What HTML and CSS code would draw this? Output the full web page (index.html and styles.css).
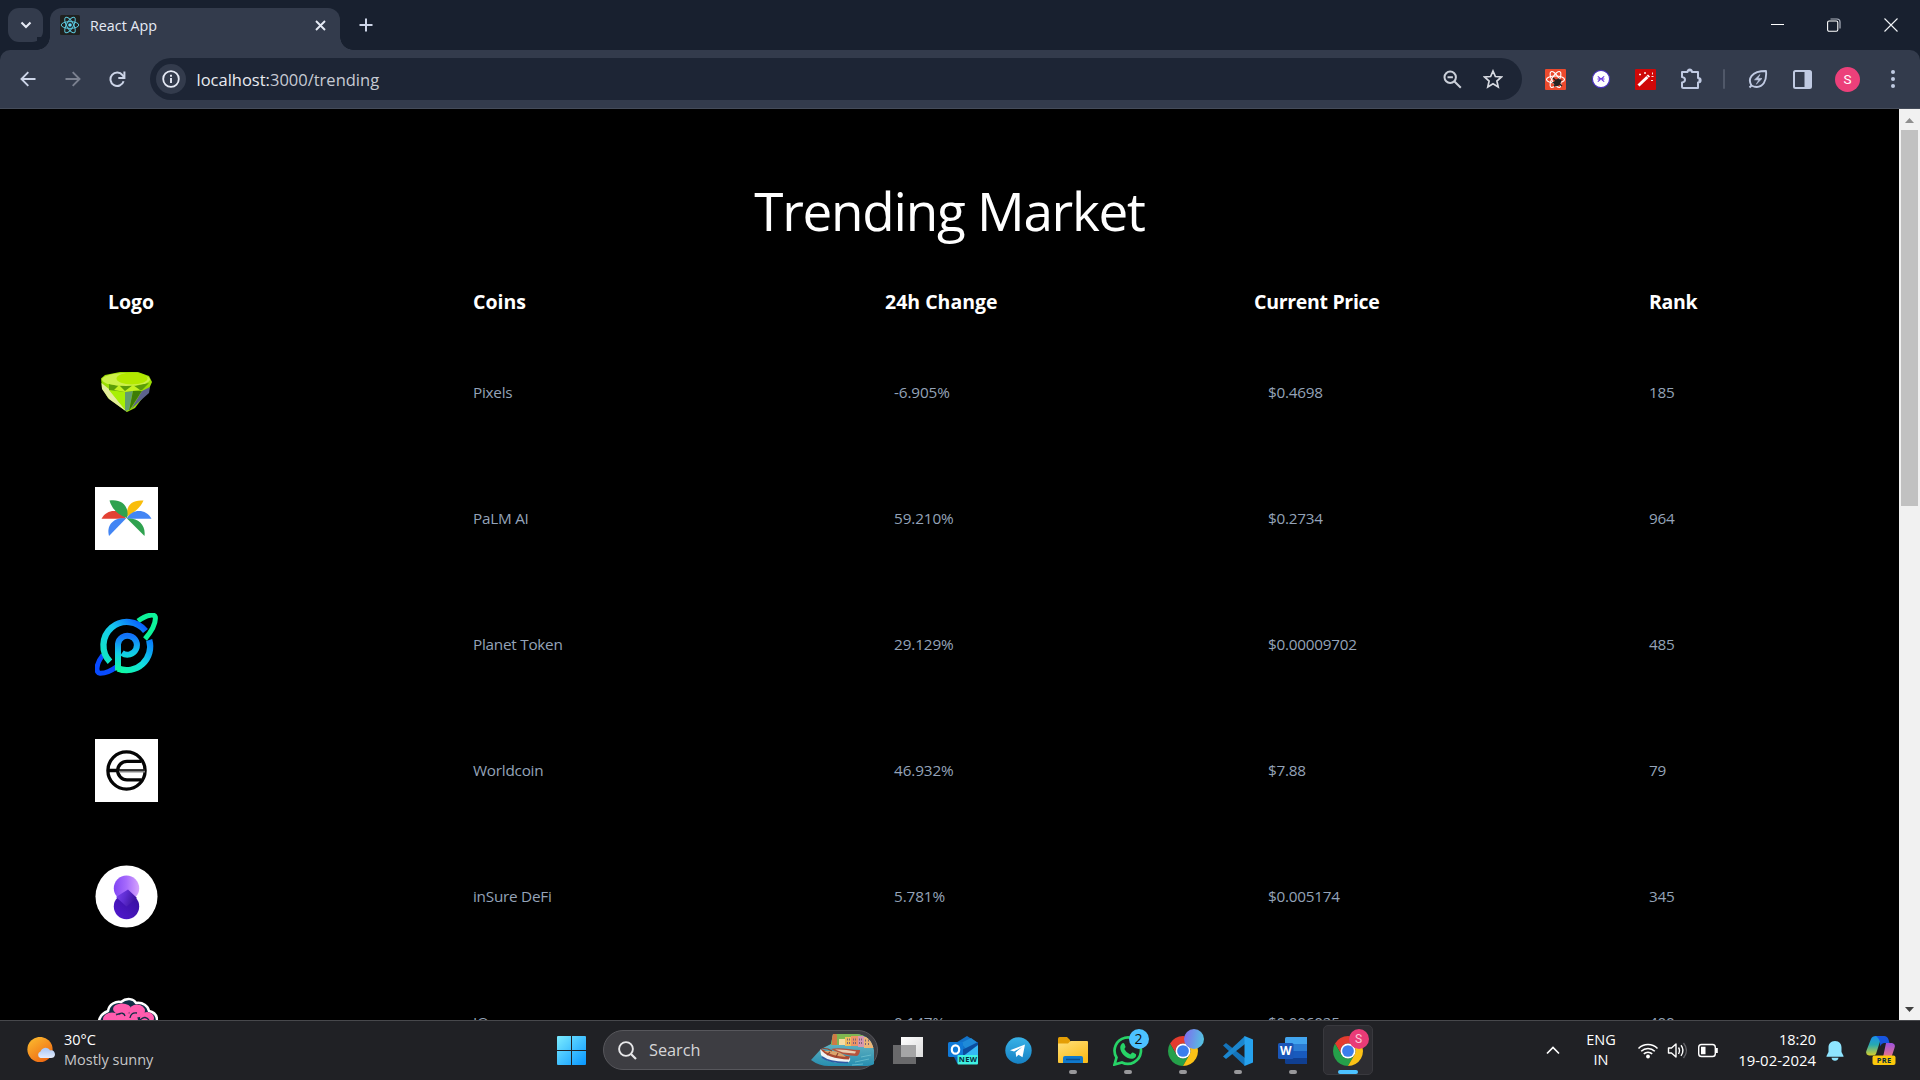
FILE: index.html
```html
<!DOCTYPE html>
<html lang="en">
<head>
<meta charset="utf-8">
<title>React App</title>
<link rel="stylesheet" href="styles.css">
</head>
<body>
<svg class="defs" width="0" height="0" aria-hidden="true">
  <symbol id="chrome" viewBox="2 2 44 44">
    <path fill="#e33b2e" d="M24 13H43.05A22 22 0 0 0 4.95 13L14.5 29.5A11 11 0 0 1 24 13Z"/>
    <path fill="#25a04a" d="M4.95 13A22 22 0 0 0 24 46L33.5 29.5A11 11 0 0 1 14.5 29.5Z"/>
    <path fill="#fbc116" d="M43.05 13H24A11 11 0 0 1 33.5 29.5L24 46A22 22 0 0 0 43.05 13Z"/>
    <circle cx="24" cy="24" r="11" fill="#fff"/><circle cx="24" cy="24" r="8.6" fill="#3b7ded"/>
  </symbol>
</svg>

<header class="tabstrip">
  <button class="tab-search"><svg width="12" height="8" viewBox="0 0 12 8"><path d="M1.5 1.5 6 6l4.500-4.500" fill="none" stroke="#e6eaf5" stroke-width="2.100"/></svg></button>
  <div class="tab">
    <svg class="favicon" width="20" height="20" viewBox="0 0 20 20"><rect width="20" height="20" rx="1.500" fill="#20211f"/><g fill="none" stroke="#5cc8dc" stroke-width="1"><ellipse cx="10" cy="10" rx="8.800" ry="3.400"/><ellipse cx="10" cy="10" rx="8.800" ry="3.400" transform="rotate(60 10 10)"/><ellipse cx="10" cy="10" rx="8.800" ry="3.400" transform="rotate(120 10 10)"/></g><circle cx="10" cy="10" r="1.800" fill="#61dafb"/></svg>
    <span class="tab-title">React App</span>
    <svg class="tab-close" width="11" height="11" viewBox="0 0 11 11"><path d="M1 1l9 9M10 1l-9 9" stroke="#e6eaf5" stroke-width="1.900"/></svg>
  </div>
  <svg class="new-tab" width="14" height="14" viewBox="0 0 14 14"><path d="M7 .5v13M.5 7h13" stroke="#cdd5e8" stroke-width="2"/></svg>
  <div class="window-controls">
    <svg width="13" height="13" viewBox="0 0 13 13"><path d="M0 6.500h13" stroke="#fff"/></svg>
    <svg width="14" height="14" viewBox="0 0 14 14"><path d="M3.500 1h6.500a3 3 0 0 1 3 3v6.500" fill="none" stroke="#aeb4c0" stroke-width="1.200"/><rect x=".6" y="3" width="10.200" height="10.200" rx="1.500" fill="none" stroke="#fff" stroke-width="1.100"/></svg>
    <svg width="14" height="14" viewBox="0 0 14 14"><path d="M.5.5l13 13M13.500.5l-13 13" stroke="#f2f4f8" stroke-width="1.100"/></svg>
  </div>
</header>

<nav class="toolbar">
  <div class="slot"><svg width="16" height="16" viewBox="0 0 16 16"><path d="M15.500 8H1.800M8.300 1.200 1.500 8l6.800 6.800" fill="none" stroke="#cdd5e8" stroke-width="1.900"/></svg></div>
  <div class="slot"><svg width="16" height="16" viewBox="0 0 16 16"><path d="M.5 8h13.700M7.700 1.200 14.500 8l-6.800 6.800" fill="none" stroke="#7b8190" stroke-width="1.900"/></svg></div>
  <div class="slot"><svg width="17" height="17" viewBox="0 0 17 17"><path d="M14.600 10.200A6.700 6.700 0 1 1 13.500 4.200L15 6" fill="none" stroke="#cdd5e8" stroke-width="2"/><path d="M15.400.5v6.400H9.300" fill="none" stroke="#cdd5e8" stroke-width="2"/></svg></div>
  <div class="omnibox">
    <span class="site-info"><svg width="18" height="18" viewBox="0 0 18 18"><circle cx="9" cy="9" r="7.800" fill="none" stroke="#e6eaf5" stroke-width="1.800"/><path d="M9 8v5M9 4.800v1.900" stroke="#e6eaf5" stroke-width="1.900"/></svg></span>
    <span class="url"><b>localhost:</b>3000/trending</span>
    <svg class="zoom-icon" width="19" height="19" viewBox="0 0 19 19"><g fill="none" stroke="#cbd0d9" stroke-width="2"><circle cx="7.200" cy="7.200" r="5.700"/><path d="M4.500 7.200h5.400M11.500 11.500l6.300 6.300"/></g></svg>
    <svg class="star-icon" width="20" height="20" viewBox="0 0 20 20"><path d="M10 2l2.400 5.500 6 .5-4.500 4 1.300 5.900L10 14.800l-5.200 3.100L6.100 12 1.600 8l6-.5z" fill="none" stroke="#d7dae1" stroke-width="1.700"/></svg>
  </div>
  <div class="slot"><svg width="21" height="21" viewBox="0 0 21 21"><rect width="21" height="21" rx="1" fill="#ec4a2d"/><g fill="none" stroke="#fff" stroke-width="1.150"><ellipse cx="10.500" cy="10.500" rx="9" ry="3.500"/><ellipse cx="10.500" cy="10.500" rx="9" ry="3.500" transform="rotate(60 10.500 10.500)"/><ellipse cx="10.500" cy="10.500" rx="9" ry="3.500" transform="rotate(120 10.500 10.500)"/></g><ellipse cx="12.500" cy="13.500" rx="3" ry="4" fill="#252322" transform="rotate(35 12.500 13.500)"/><path d="M8 9l9 8M7.500 14l9-3M9 17.500l2.500-3M14 9.500l-1 2" stroke="#252322" stroke-width="1.500"/></svg></div>
  <div class="slot"><svg width="20" height="20" viewBox="0 0 20 20"><circle cx="10" cy="10" r="8.600" fill="#fff" stroke="#4931bc" stroke-width="1.200"/><path d="M6.800 7.400l6.400 5.200M13.200 7.400l-6.400 5.200M6.500 10H9M11 10h2.500" stroke="#6a35e0" stroke-width="1.200"/></svg></div>
  <div class="slot"><svg width="21" height="21" viewBox="0 0 21 21"><rect width="21" height="21" rx="1" fill="#cf0808"/><path d="M3.500 16.500 14 6.500" stroke="#fff" stroke-width="3"/><path d="M11.500 6.800l2.800 2.800" stroke="#cf0808" stroke-width=".8"/><path d="M5 4.500v2M4 5.500h2M10 3v2M9 4h2M16.500 7.500h2M17.500 3.500v2M16 11.500h2" stroke="#fff" stroke-width=".9"/></svg></div>
  <div class="slot"><svg width="22" height="22" viewBox="0 0 22 22"><path d="M2 4h5.500C7.300.8 12.200.8 12 4h6v6c3.500-.2 3.500 4.400 0 4.500V20H3.500Q2 20 2 18.500v-4c4-.3 4-5 0-5.500z" fill="none" stroke="#c0cae2" stroke-width="2" stroke-linejoin="round"/><path d="M7.500 3.500C7.500.5 12 .5 12 3.500zM18.500 10c3 0 3 4.500 0 4.500z" fill="#c0cae2"/></svg></div>
  <i class="divider"></i>
  <div class="slot"><svg width="20" height="20" viewBox="0 0 20 20"><path d="M3.500 16.500C-.5 10 3 2 18 2c1 10-3 17-11 15.800Q5 17.300 3.500 16.500L1.500 18.500" fill="none" stroke="#c0cae2" stroke-width="1.900" stroke-linejoin="round"/><path d="M12 5.500 6.500 10.800l4.300.2L8.300 15.200 14 9.500l-4-.3z" fill="#c0cae2" stroke="#c0cae2" stroke-width=".6"/></svg></div>
  <div class="slot"><svg width="19" height="19" viewBox="0 0 19 19"><rect x="1" y="1" width="17" height="17" rx="1.500" fill="none" stroke="#c0cae2" stroke-width="2"/><path d="M11.500 1H18v17h-6.500z" fill="#c0cae2"/></svg></div>
  <div class="slot"><span class="avatar">S</span></div>
  <div class="slot"><svg width="4" height="20" viewBox="0 0 4 20"><g fill="#c0cae2"><circle cx="2" cy="3" r="2"/><circle cx="2" cy="10" r="2"/><circle cx="2" cy="17" r="2"/></g></svg></div>
</nav>

<div class="viewport">
  <main class="page">
    <h1 class="title">Trending Market</h1>
    <div class="row head"><span class="logo-head">Logo</span><span>Coins</span><span>24h Change</span><span class="price-head">Current Price</span><span class="rank-head">Rank</span></div>

    <div class="row coin">
      <svg width="63" height="63" viewBox="0 0 63 63"><path d="M6 17.500 10 14l15-3h18l11 4 3 6-3.500 8L40 47l-8 4L13 37 7 27z" fill="#9bde04"/><path d="M6.500 22 14 28l18 23L14 38 7 28z" fill="#e4ed9b"/><path d="M14 29l16 1 1 20z" fill="#a8ef05"/><path d="M30 30h8l-4 19-4 1z" fill="#639e6e"/><path d="M38 30h9L34 50z" fill="#3d7c06"/><path d="M47 30l8-4-1 6-18 16z" fill="#5c628c"/><path d="M14 23l10 2 8-1 8 1 14-3-7 7-17 2-16-2z" fill="#5c9d08"/><path d="M19 29l5-5 6 6 8-6 7 5-15 2z" fill="#c4f221"/><ellipse cx="31" cy="18.500" rx="24" ry="6.500" fill="#cdf04a"/><ellipse cx="37" cy="17.500" rx="15.500" ry="6" fill="#b3e900"/></svg>
      <span>Pixels</span><span class="change">-6.905%</span><span class="price">$0.4698</span><span>185</span>
    </div>

    <div class="row coin">
      <svg width="63" height="63" viewBox="0 0 63 63"><path fill="#fff" d="M0 0h63v63H0z"/><path fill="#f9bd0b" d="M32 29.500C31 19 36 12.500 48.500 13.500 46 20 40 25 32 29.500z"/><path fill="#e34133" d="M6.500 31.800C12 21.500 26 21.500 31 31.800z"/><path fill="#4285f4" d="M31.500 31.800C37 21.500 51 21.500 56.500 31.800z"/><path fill="#2fa24f" d="M32 31C23 28 17 22 14.500 13.500 26 11.500 35 19 32 31zM32 31.500c11-1 19 6 17.500 17.500z"/><path fill="#4285f4" d="M31 31.500C19 30 11 38 14 49z"/></svg>
      <span>PaLM AI</span><span class="change">59.210%</span><span class="price">$0.2734</span><span>964</span>
    </div>

    <div class="row coin">
      <svg width="63" height="63" viewBox="0 0 63 63"><defs><linearGradient id="pa" x1="0" y1="1" x2="1" y2="0"><stop stop-color="#11e9c0"/><stop offset=".55" stop-color="#16c8f0"/><stop offset="1" stop-color="#074dff"/></linearGradient><linearGradient id="pb" x1="1" y1="0" x2="0" y2="1"><stop stop-color="#087dfb"/><stop offset=".5" stop-color="#12dde3"/><stop offset="1" stop-color="#10fba0"/></linearGradient><linearGradient id="pc" x2="0" y2="1"><stop stop-color="#1272fb"/><stop offset=".5" stop-color="#12cde8"/><stop offset="1" stop-color="#10fba0"/></linearGradient></defs>
        <g fill="none"><path d="M43 8C53 1 59.500 1 60.300 4c.7 6-4.300 15-10.300 22" stroke="#0df39a" stroke-width="5"/><path d="M8 42C0 52 1 60 5 60.300 10 60.500 16 58 22 53.500" stroke="#084bff" stroke-width="5"/><path d="M15 48.700A23.500 23.500 0 1 1 50.500 18" stroke="url(#pa)" stroke-width="6.300"/><path d="M54.200 27A23.500 23.500 0 0 1 23 55.500" stroke="url(#pb)" stroke-width="6.300"/><path d="M23 57.500V31A9.500 9.500 0 1 1 27 40" stroke="url(#pc)" stroke-width="6"/></g></svg>
      <span>Planet Token</span><span class="change">29.129%</span><span class="price">$0.00009702</span><span>485</span>
    </div>

    <div class="row coin">
      <svg width="63" height="63" viewBox="0 0 63 63"><path fill="#fff" d="M0 0h63v63H0z"/><g fill="none" stroke="#050505" stroke-width="3.300"><circle cx="31.500" cy="31.500" r="18.600"/><path d="M46.500 22.300H32a9.300 9.300 0 0 0 0 18.600h14.500M13 31.500h12"/></g><path d="M24 32h26" stroke="#868686" stroke-width="3"/><path d="M22 31h28" stroke="#111" stroke-width="1.500"/></svg>
      <span>Worldcoin</span><span class="change">46.932%</span><span class="price">$7.88</span><span>79</span>
    </div>

    <div class="row coin">
      <svg width="63" height="63" viewBox="0 0 63 63"><defs><linearGradient id="ia"><stop stop-color="#8246f4"/><stop offset=".5" stop-color="#a66bfc"/><stop offset="1" stop-color="#d6a4fc"/></linearGradient><linearGradient id="ib" x1="0" y1="1" x2="1" y2="0"><stop stop-color="#5219d0"/><stop offset="1" stop-color="#35109b"/></linearGradient><linearGradient id="ic" x1="0" y1="0" x2="1" y2=".3"><stop stop-color="#7c44f2"/><stop offset=".5" stop-color="#5f2dd2"/><stop offset="1" stop-color="#3d139f"/></linearGradient></defs><circle cx="31.500" cy="31.500" r="31" fill="#fff"/><circle cx="31.500" cy="23.200" r="12.700" fill="url(#ia)"/><circle cx="31.500" cy="41.500" r="12.700" fill="url(#ib)"/><path d="M33 24.500 42 33 31.500 41.500 21 32z" fill="url(#ic)"/></svg>
      <span>inSure DeFi</span><span class="change">5.781%</span><span class="price">$0.005174</span><span>345</span>
    </div>

    <div class="row coin">
      <svg width="63" height="63" viewBox="0 0 63 63"><g transform="translate(0 2)"><path d="M4 34c-1-8 4-12 9-14 1-7 8-10 13-9 6-5 13-3 15 1 7-1 12 3 13 8 6 1 9 6 8 14z" fill="#102e46" stroke="#fff" stroke-width="2.500" stroke-linejoin="round" transform="translate(0 -2)"/><g fill="#ff5cae"><ellipse cx="27" cy="16" rx="9" ry="5.500"/><ellipse cx="42" cy="18" rx="8" ry="6.500"/><ellipse cx="17" cy="26" rx="9" ry="6.500"/><ellipse cx="52" cy="25" rx="7" ry="6"/><ellipse cx="32" cy="27" rx="11" ry="7"/></g><path d="M21 22q8-4 9 1M35 25q1-6 7-5M45 27q5-5 9 0" fill="none" stroke="#102e46" stroke-width="1.300"/></g></svg>
      <span>IQ</span><span class="change">0.147%</span><span class="price">$0.006025</span><span>400</span>
    </div>
  </main>
  <aside class="scrollbar">
    <svg width="9" height="5" viewBox="0 0 9 5"><path d="M4.500 0 9 5H0z" fill="#8f8f8f"/></svg>
    <div class="track"><div class="thumb"></div></div>
    <svg width="9" height="5" viewBox="0 0 9 5"><path d="M4.500 5 9 0H0z" fill="#404040"/></svg>
  </aside>
</div>

<footer class="taskbar">
  <div class="weather">
    <svg width="30" height="28" viewBox="0 0 30 28"><defs><linearGradient id="sun" x2=".7" y2="1"><stop stop-color="#fcc031"/><stop offset="1" stop-color="#ef6812"/></linearGradient><linearGradient id="cloud" x2="0" y2="1"><stop stop-color="#a9c6f5"/><stop offset="1" stop-color="#e4ebfa"/></linearGradient></defs><circle cx="14" cy="12.500" r="12.600" fill="url(#sun)"/><path d="M14.500 21a3.400 3.400 0 0 1 0-6.500c2-5 8-4.500 9.500-1 3-1 5 1.500 5 4s-2 3.500-4 3.500z" fill="url(#cloud)"/></svg>
    <div class="weather-text"><span>30°C</span><span class="muted">Mostly sunny</span></div>
  </div>
  <div class="apps">
    <div class="app"><svg width="29" height="29" viewBox="0 0 29 29"><defs><linearGradient id="win" x2="1" y2="1"><stop stop-color="#7cecff"/><stop offset="1" stop-color="#0796ff"/></linearGradient></defs><path d="M0 1q0-1 1-1h13v14H0zM15 0h13q1 0 1 1v13H15zM0 15h14v14H1q-1 0-1-1zM15 15h14v13q0 1-1 1H15z" fill="url(#win)"/></svg></div>
    <div class="search">
      <svg width="19" height="19" viewBox="0 0 19 19"><circle cx="8" cy="8" r="6.900" fill="none" stroke="#e7e7e9" stroke-width="1.900"/><path d="M13 13l5 5" stroke="#e7e7e9" stroke-width="2.200"/></svg>
      <span class="search-label">Search</span>
      <svg class="harbor" width="63" height="34" viewBox="0 0 63 34"><defs><clipPath id="hc"><path d="M0 27 10 16 20 11 22 1H45q15 1 18 16v14q-3 2-10 2H18Q8 33 0 27z"/></clipPath><linearGradient id="sea" x2="0" y2="1"><stop stop-color="#7cc3c9"/><stop offset="1" stop-color="#248caf"/></linearGradient></defs><g clip-path="url(#hc)"><path d="M0 0h63v34H0z" fill="url(#sea)"/><path d="M20 0h32l4 12H20z" fill="#7fb650"/><path d="M21 2l2.500-2L26 2v10h-5z" fill="#cf7a45"/><path d="M34 4h6v9h-6z" fill="#efbd5c"/><path d="M40 3h7v10h-7z" fill="#ee9366"/><path d="M47 3h6v11h-6z" fill="#d597b0"/><path d="M53 4h10v11H53z" fill="#edb577"/><path d="M28 6h6v6h-6z" fill="#f4dba2"/><path d="M36 6.500h1m1 0h1m3 0h1m1 0h1m3 0h1m1 0h1m3 1h1m2 0h1M36 10h1m1 0h1m3 0h1m1 0h1m3 0h1m1 0h1m3 1h1m2 0h1" stroke="#7b6478" stroke-width="1.800"/><path d="M20 16c10-2 18 1 29 1q0 4-3 6-14 0-26-7z" fill="#b4533c"/><path d="M24 16.500q9-.5 21 2l-1 2-12-1z" fill="#e9cdb0"/><path d="M9 15c5 6 16 9 30 9.500q1 4-3 5.500-20 1-26-8z" fill="#f0f3f4"/><path d="M9 15c6 4 17 7 30 8.500l-1 3C24 26 13 23 9 15z" fill="#aa4a32"/><path d="M13 18q8 5 22 6-5-5-13-6z" fill="#dba46b"/><path d="M19 19l-3 3M27 20l-2 4M9 15l8 1 4 2" stroke="#8d4530" stroke-width="1.200" fill="none"/><path d="M11 24q8 6 26 5.500" stroke="#2f5ba5" stroke-width="1.600" fill="none"/><path d="M44 29l14-3M41 32l11-1M50 24l10-2" stroke="#6ec2cf" stroke-width=".8"/></g></svg>
    </div>
    <div class="app task-view"><svg width="30" height="28" viewBox="0 0 30 28"><defs><linearGradient id="tv" x2="1" y2="1"><stop stop-color="#fff"/><stop offset="1" stop-color="#dcdcdc"/></linearGradient></defs><path d="M0 8h23v19H0z" fill="#69696b"/><path d="M8 0h22v20H8z" fill="url(#tv)"/><path d="M8 8h15v12H8z" fill="#a5a5a6"/></svg></div>
    <div class="app"><svg width="30" height="29" viewBox="0 0 30 29"><path d="M6 8 19 0l11 7v14H6z" fill="#1272c8"/><path d="M13 7 23 2l7 5-11 7z" fill="#1f8ad8"/><path d="M14 14 30 6v15H14z" fill="#0b4c9e"/><path d="M14 21 30 9v14H14z" fill="#35b9f5"/><path d="M5 19h15l-3 8H9z" fill="#1061b9"/><rect y="6" width="15" height="15" rx="1.500" fill="#1079d7"/><ellipse cx="7.500" cy="13.500" rx="3.700" ry="4.200" fill="none" stroke="#fff" stroke-width="2.200"/><rect x="9.500" y="19" width="20.500" height="9.500" rx="1" fill="#3ff0e2"/><text x="20" y="26.400" text-anchor="middle" class="new">NEW</text></svg></div>
    <div class="app"><svg width="27" height="27" viewBox="0 0 27 27"><defs><linearGradient id="tg" x2="0" y2="1"><stop stop-color="#38b2e7"/><stop offset="1" stop-color="#1681c4"/></linearGradient></defs><circle cx="13.500" cy="13.500" r="13.200" fill="url(#tg)"/><path d="M5 13.300 20 7.500l-2.500 12.800-4-2.600-2.200 2.200-.7-4.500 6.500-5.400-8 4.600z" fill="#fff"/></svg></div>
    <div class="app open"><svg width="30" height="27" viewBox="0 0 30 27"><defs><linearGradient id="fo" x2=".6" y2="1"><stop stop-color="#ffe07a"/><stop offset="1" stop-color="#fbbd1d"/></linearGradient></defs><path d="M0 1.500Q0 0 1.500 0H9l3 3v5H0z" fill="#e49e05"/><path d="M0 6.500h10L12.500 4H29q1 0 1 1v20q0 1-1 1H1q-1 0-1-1z" fill="url(#fo)"/><path d="M5 26v-5q0-2 2-2h16q2 0 2 2v5z" fill="#1079cd"/><path d="M8 22.500h14" stroke="#0b4e8f" stroke-width="1.500"/></svg></div>
    <div class="app open"><svg width="30" height="30" viewBox="0 0 30 30"><path d="M1.500 28.500 3.500 21.500A13.200 13.200 0 1 1 9 26.500z" fill="none" stroke="#27d367" stroke-width="2.700"/><path d="M9 7.500q1.500-1 2.500.5l1 2.800q0 1-1.200 2.200 2 4 6 5.500l1.700-1.700q.7-.5 1.500 0l2.500 1.500q.7 3-2.500 4.200C14 24 7 17.500 7.200 11q.2-2 1.800-3.500z" fill="#27d367"/></svg><span class="badge count">2</span></div>
    <div class="app open"><svg width="30" height="30"><use href="#chrome"/></svg><span class="badge profile"></span></div>
    <div class="app open"><svg width="30" height="30" viewBox="0 0 30 30"><path d="M0 9.500 3 7l19 15v8z" fill="#1474bb"/><path d="M0 20.500 3 23 22 8V0z" fill="#1b86ce"/><path d="M21.500 0 30 3.500v23L21.500 30z" fill="#26a2ee"/></svg></div>
    <div class="app open"><svg width="30" height="28" viewBox="0 0 30 28"><path d="M7 1.500Q7 0 8.500 0H29v7H7z" fill="#42a5ef"/><path d="M7 7h22v7H7z" fill="#2b7cd3"/><path d="M7 14h22v7H7z" fill="#185abd"/><path d="M7 21h22v6H8.500Q7 27 7 25.500z" fill="#103f91"/><rect y="6" width="15.500" height="16" rx="1.500" fill="#1a56b8"/><text x="7.700" y="18.300" text-anchor="middle" class="word">W</text></svg></div>
    <div class="app open active"><svg width="30" height="30"><use href="#chrome"/></svg><span class="badge pink">S</span></div>
  </div>
  <div class="tray">
    <svg class="expand" width="14" height="9" viewBox="0 0 14 9"><path d="M1 7.500 7 1.500l6 6" fill="none" stroke="#fff" stroke-width="1.700"/></svg>
    <div class="language"><span>ENG</span><span>IN</span></div>
    <svg class="status" width="30" height="20" viewBox="0 0 30 20"><g fill="none" stroke="#fff" stroke-width="1.500"><path d="M5.500 7.500a13.400 13.400 0 0 1 19 0M8.200 10.200a9.600 9.600 0 0 1 13.600 0M10.800 12.900a6 6 0 0 1 8.400 0"/></g><circle cx="15" cy="15.500" r="1.900" fill="#fff"/></svg>
    <svg class="status" width="30" height="20" viewBox="0 0 30 20"><path d="M5.500 7h3L13 3v13l-4.500-4h-3zM15.500 6.500q2 3 0 6.500M18 4.300q4 5 0 10.500" fill="none" stroke="#fff" stroke-width="1.400" stroke-linejoin="round"/><path d="M20.500 2q6 7.500 0 15" fill="none" stroke="#626267" stroke-width="1.400"/></svg>
    <svg class="status" width="30" height="20" viewBox="0 0 30 20"><rect x="5.700" y="3.500" width="16.600" height="12" rx="2.800" fill="none" stroke="#fff" stroke-width="1.400"/><path d="M8 5.800h4.500v7.400H8zM23 7h1.800v5H23z" fill="#fff"/></svg>
    <div class="clock"><span>18:20</span><span class="date">19-02-2024</span></div>
    <svg class="bell" width="18" height="20" viewBox="0 0 18 20"><path d="M9 0c4.500 0 6.500 3 6.500 6.500V11l2 4v.8H.5V15l2-4V6.500C2.500 3 4.500 0 9 0zM5.500 16.800h7Q12 19.800 9 19.800t-3.500-3z" fill="#8ee5ff"/></svg>
    <svg class="copilot" width="30" height="29" viewBox="0 0 30 29"><defs><linearGradient id="ca" x1="0" y1="0" x2="0" y2="1"><stop stop-color="#188fed"/><stop offset=".45" stop-color="#27a9b1"/><stop offset="1" stop-color="#d7cf29"/></linearGradient><linearGradient id="cb" x2="0" y2="1"><stop stop-color="#9d52df"/><stop offset="1" stop-color="#fb7d72"/></linearGradient></defs><path d="M5 3Q6 0 10 0h9q-4 2-5.500 7L10 18q-1 1.500-3 1.500H3Q-1 18.500.5 14.500z" fill="url(#ca)"/><path d="M10 0h8q3.500 0 4.500 3.500L23.500 7h-5q-3 0-4.500 3.500 1-7-4-10.500z" fill="#1755df"/><path d="M20 7h6q4 1 2.500 5l-3 9q-1 3-4 3h-8q3-1 4-5z" fill="url(#cb)"/><rect x="6.500" y="19.500" width="23" height="9.500" rx="2" fill="#fbc80b"/><text x="18.200" y="26.700" text-anchor="middle" class="new">PRE</text></svg>
  </div>
</footer>
</body>
</html>
```
FILE: styles.css
```css
* { box-sizing: border-box; }
body {
  margin: 0;
  width: 1920px;
  height: 1080px;
  overflow: hidden;
  display: flex;
  flex-direction: column;
  background: #000;
  color: #fff;
  font-family: "Open Sans", "Noto Sans", sans-serif;
}
svg { display: block; flex: none; }
.defs { position: absolute; }

/* Browser tab strip */
.tabstrip {
  height: 50px;
  flex: none;
  display: flex;
  align-items: flex-start;
  padding: 8px 0 0 8px;
  background: #18202f;
}
.tab-search {
  width: 35px;
  height: 34px;
  margin-right: 7px;
  padding: 0;
  border: 0;
  border-radius: 11px;
  background: #333b4c;
  display: grid;
  place-items: center;
}
.tab {
  position: relative;
  width: 290px;
  height: 42px;
  padding: 0 14px 8px 10px;
  border-radius: 12px 12px 0 0;
  background: #333b4c;
  display: flex;
  align-items: center;
}
.tab::before, .tab::after {
  content: "";
  position: absolute;
  bottom: 0;
  width: 13px;
  height: 13px;
}
.tab::before { left: -13px; background: radial-gradient(circle at 0 0, #18202f 12.5px, #333b4c 13px); }
.tab::after { right: -13px; background: radial-gradient(circle at 100% 0, #18202f 12.5px, #333b4c 13px); }
.tab-title { flex: 1; margin-left: 10px; padding-top: 1px; font-size: 14.300px; line-height: 20px; color: #e6eaf5; }
.new-tab { margin: 10px 0 0 19px; }
.window-controls { margin: 10px 22px 0 auto; display: flex; gap: 43px; }

/* Browser toolbar */
.toolbar {
  height: 59px;
  flex: none;
  display: flex;
  align-items: center;
  padding: 0 5px;
  border-bottom: 1px solid #454c5a;
  border-radius: 10px 10px 0 0;
  background: #333b4c;
  box-shadow: 0 -10px 0 #18202f;
  clip-path: inset(0);
}
.slot { width: 45px; flex: none; display: grid; place-items: center; }
.omnibox {
  flex: 1;
  height: 42px;
  margin: 0 11px 0 10px;
  padding: 0 19px 0 6px;
  border-radius: 21px;
  background: #1d2535;
  display: flex;
  align-items: center;
}
.site-info {
  width: 30px;
  height: 30px;
  border-radius: 50%;
  background: #333b4c;
  display: grid;
  place-items: center;
}
.url { flex: 1; margin-left: 10.500px; padding-top: 1px; font-size: 16.500px; line-height: 24px; color: #c7cbd4; }
.url b { font-weight: 400; color: #e9ebf0; }
.star-icon { margin-left: 21px; }
.divider { width: 2px; height: 20px; margin: 0 10px; border-radius: 1px; background: #505869; }
.avatar {
  width: 25px;
  height: 25px;
  border-radius: 50%;
  background: #ec407a;
  text-align: center;
  font: 13.500px/25px Roboto, sans-serif;
}

/* Web page */
.viewport { flex: 1; min-height: 0; display: flex; overflow: hidden; }
.page { flex: 1; padding-top: 69.500px; }
.title {
  margin: 0 0 31px;
  font-size: 53px;
  line-height: 64px;
  font-weight: 400;
  letter-spacing: -1.250px;
  text-align: center;
}
.row {
  display: grid;
  grid-template-columns: 378px 412px 369px 395px 1fr;
  align-items: center;
  padding-left: 95px;
}
.head { height: 56px; font-size: 19.500px; font-weight: 700; }
.logo-head { padding-left: 13px; }
.price-head, .rank-head { letter-spacing: -.300px; }
.coin { height: 126px; font-size: 15.300px; letter-spacing: -.250px; color: #94a3b8; }
.coin span { padding-bottom: 2px; }
.change { padding-left: 9px; letter-spacing: -.120px; }
.price { padding-left: 14px; }
.scrollbar {
  width: 21px;
  padding: 9px 0 8px;
  background: #f1f1f1;
  display: flex;
  flex-direction: column;
  align-items: center;
  gap: 7px;
}
.track { flex: 1; width: 17px; }
.thumb { height: 376px; background: #c1c1c1; }

/* Windows taskbar */
.taskbar {
  height: 60px;
  flex: none;
  display: grid;
  grid-template-columns: 544px 1fr auto;
  background: #202125;
  border-top: 1px solid #47484c;
}
.weather { display: flex; align-items: center; padding-left: 26px; gap: 8px; font-size: 14.500px; line-height: 20px; }
.weather-text { display: flex; flex-direction: column; padding-bottom: 2px; }
.muted { color: #c6c6c8; }
.apps { display: flex; align-items: center; }
.app {
  position: relative;
  width: 55px;
  height: 59px;
  flex: none;
  display: grid;
  place-items: center;
}
.task-view { margin-left: 2.500px; }
.search {
  width: 275px;
  height: 40px;
  margin: 0 0 1px 4px;
  padding: 0 3px 0 14px;
  border: 1px solid #57575c;
  border-radius: 20px;
  background: #3d3d42;
  display: flex;
  align-items: center;
}
.search-label { flex: 1; margin-left: 12px; font-size: 16.300px; line-height: 24px; color: #d6d6d8; }
.open::after {
  content: "";
  position: absolute;
  left: 23.500px;
  bottom: 6px;
  width: 8px;
  height: 4px;
  border-radius: 2px;
  background: #98989b;
}
.active { z-index: 0; }
.active::before {
  content: "";
  position: absolute;
  z-index: -1;
  inset: 4px 2.500px 5px;
  border: 1px solid #39393e;
  border-radius: 5px;
  background: #2d2d32;
}
.active::after { left: 17.500px; width: 20px; background: #4cc2ff; }
.badge {
  position: absolute;
  left: 28px;
  top: 8px;
  width: 20px;
  height: 20px;
  border-radius: 50%;
  text-align: center;
  line-height: 20px;
}
.count { background: #4cc2ff; color: #111; font-size: 14px; }
.profile { background: linear-gradient(100deg, #8067ef, #50cce0); }
.pink { background: #e93b77; color: #fbc9d9; font: 12px/20px Roboto, sans-serif; }
.new { font: 700 7.500px "Open Sans", sans-serif; fill: #062c3d; letter-spacing: .3px; }
.word { font: 700 12px "Open Sans", sans-serif; fill: #fff; }
.tray { display: flex; align-items: center; padding-right: 24px; font-size: 14.500px; line-height: 20px; }
.expand { margin-right: 16px; }
.language, .clock { display: flex; flex-direction: column; padding-bottom: 2px; }
.language { width: 50px; margin-right: 7px; align-items: center; }
.clock { width: 93px; align-items: flex-end; }
.date { font-size: 14.900px; }
.bell { margin: 0 22px 0 10px; }
```
